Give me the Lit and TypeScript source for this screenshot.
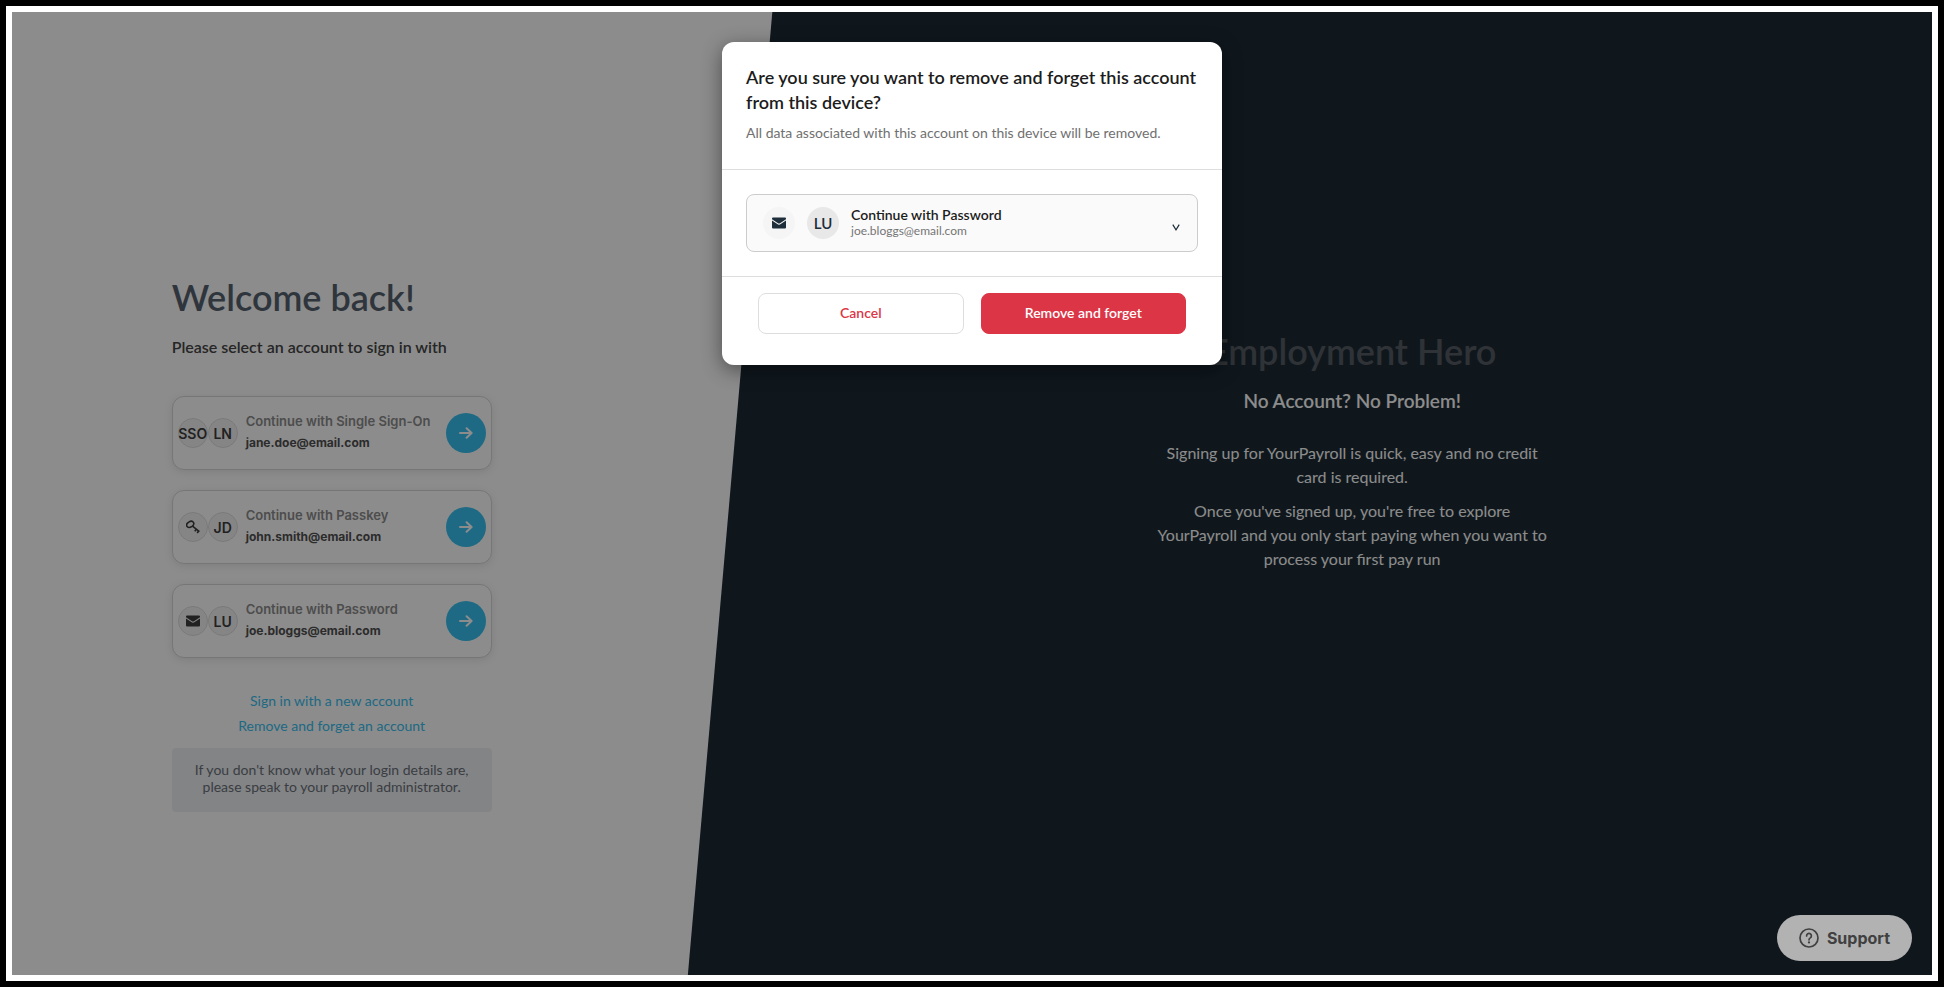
import { LitElement, html, css, svg } from "lit";
import { customElement, property, state } from "lit/decorators.js";

type Method = "sso" | "passkey" | "password";

interface Account {
  method: Method;
  label: string;
  email: string;
  initials: string;
}

const ACCOUNTS: Account[] = [
  { method: "sso", label: "Continue with Single Sign-On", email: "jane.doe@email.com", initials: "LN" },
  { method: "passkey", label: "Continue with Passkey", email: "john.smith@email.com", initials: "JD" },
  { method: "password", label: "Continue with Password", email: "joe.bloggs@email.com", initials: "LU" },
];

const envelope = html`<svg width="14" height="12" viewBox="0 0 14 12" aria-hidden="true">
  ${svg`<path fill="currentColor" d="M1 0.5h12a1 1 0 0 1 1 1v.8L8 6.2a1.8 1.8 0 0 1-2 0L0 2.3v-.8a1 1 0 0 1 1-1z"/>
  <path fill="currentColor" d="M0 3.5l5.3 3.6a3 3 0 0 0 3.4 0L14 3.5v7a1 1 0 0 1-1 1H1a1 1 0 0 1-1-1z"/>`}
</svg>`;

const key = html`<svg width="14" height="14" viewBox="0 0 14 14" aria-hidden="true">
  ${svg`<g fill="none" stroke="currentColor" stroke-width="1.6">
    <ellipse cx="4.2" cy="4.4" rx="3.8" ry="2.7" transform="rotate(-32 4.2 4.4)"/>
    <path d="M6.2 5.9l7.2 5.8M8.7 11.2l2-2.2M11.1 12.9l1.7-1.8"/>
  </g>`}
</svg>`;

const arrow = html`<svg width="14" height="12" viewBox="0 0 14 12" aria-hidden="true">
  ${svg`<path d="M1 6h11.4M7.6 1.2L12.6 6l-5 4.8" fill="none" stroke="currentColor" stroke-width="2" stroke-linecap="round" stroke-linejoin="round"/>`}
</svg>`;

const methodIcon = (m: Method) => (m === "sso" ? "SSO" : m === "passkey" ? key : envelope);

@customElement("account-card")
class AccountCard extends LitElement {
  @property({ attribute: false }) account!: Account;

  static styles = css`
    :host { display: block; }
    .card {
      box-sizing: border-box;
      display: flex;
      align-items: center;
      width: 100%;
      height: 74px;
      padding: 0 5px;
      border: 1px solid #d8d8d8;
      border-radius: 12px;
      background: #fff;
      box-shadow: 0 2px 8px rgba(0, 0, 0, 0.1);
      font-family: Inter, "Liberation Sans", sans-serif;
      text-align: left;
      cursor: pointer;
    }
    .chip {
      box-sizing: border-box;
      display: flex;
      flex: none;
      align-items: center;
      justify-content: center;
      width: 30px;
      height: 30px;
      border: 1px solid #dedede;
      border-radius: 50%;
      background: #f3f3f3;
      color: #3c3c3c;
      font-size: 14px;
      font-weight: 600;
    }
    .text { flex: 1; padding: 0 0 2px 8px; line-height: 21px; }
    .label { display: block; color: #8c8c8c; font-size: 13px; font-weight: 600; }
    .email { display: block; color: #505050; font-size: 12px; font-weight: 700; }
    .go {
      display: flex;
      flex: none;
      align-items: center;
      justify-content: center;
      width: 40px;
      height: 40px;
      border-radius: 50%;
      background: #38c0f0;
      color: #fff;
    }
  `;

  render() {
    const a = this.account;
    return html`<button class="card" type="button">
      <span class="chip">${methodIcon(a.method)}</span>
      <span class="chip">${a.initials}</span>
      <span class="text"><span class="label">${a.label}</span><span class="email">${a.email}</span></span>
      <span class="go">${arrow}</span>
    </button>`;
  }
}

@customElement("forget-dialog")
class ForgetDialog extends LitElement {
  @state() private selected = 2;

  static styles = css`
    :host { display: block; width: 500px; max-width: 100%; }
    .dialog {
      border-radius: 12px;
      background: #fff;
      color: #1c1c1c;
      box-shadow: 0 5px 20px rgba(0, 0, 0, 0.45);
    }
    .head { padding: 23px 24px 24px; border-bottom: 1px solid #dedede; }
    h2 { margin: 0 0 6px; font-size: 18px; font-weight: 600; line-height: 25px; }
    .note { margin: 0; color: #707070; font-size: 14px; line-height: 24px; }
    .body { padding: 24px; border-bottom: 1px solid #dedede; }
    .picker { display: grid; height: 58px; }
    .picker > * { grid-area: 1 / 1; }
    select {
      appearance: none;
      width: 100%;
      height: 100%;
      margin: 0;
      padding: 0 40px 18px 104px;
      border: 1px solid #ccc;
      border-radius: 8px;
      background: #fafafa;
      color: #1c1c1c;
      font: 600 14px Lato, "Liberation Sans", sans-serif;
    }
    .face {
      display: flex;
      align-items: center;
      gap: 12px;
      padding: 0 18px 0 17px;
      color: #1d2d3a;
      pointer-events: none;
    }
    .chip {
      display: flex;
      align-items: center;
      justify-content: center;
      width: 32px;
      height: 32px;
      border-radius: 50%;
      background: #f5f5f5;
      font-size: 15px;
      font-weight: 600;
    }
    .initials { background: #e8e8e8; }
    .email { flex: 1; padding-top: 16px; color: #757575; font-size: 12px; line-height: 16px; }
    .caret { padding-top: 8px; }
    .actions { display: grid; grid-template-columns: 1fr 1fr; gap: 17px; padding: 16px 36px 31px; }
    .actions button {
      box-sizing: border-box;
      height: 41px;
      padding: 0 0 2px;
      border: 1px solid #dedede;
      border-radius: 8px;
      background: #fff;
      color: #dc3545;
      font: 600 14px Lato, "Liberation Sans", sans-serif;
      cursor: pointer;
    }
    .actions .danger { border-color: #dc3545; background: #dc3545; color: #fff; }
  `;

  private pick(e: Event) {
    this.selected = (e.target as HTMLSelectElement).selectedIndex;
  }

  render() {
    const a = ACCOUNTS[this.selected];
    return html`<div class="dialog" role="dialog" aria-modal="true" aria-labelledby="title">
      <div class="head">
        <h2 id="title">Are you sure you want to remove and forget this account from this device?</h2>
        <p class="note">All data associated with this account on this device will be removed.</p>
      </div>
      <div class="body">
        <div class="picker">
          <select aria-labelledby="title" @change=${this.pick}>
            ${ACCOUNTS.map((o, i) => html`<option ?selected=${i === this.selected}>${o.label}</option>`)}
          </select>
          <div class="face">
            <span class="chip">${methodIcon(a.method)}</span>
            <span class="chip initials">${a.initials}</span>
            <span class="email">${a.email}</span>
            <svg class="caret" width="8" height="7" viewBox="0 0 8 7" aria-hidden="true">
              <path d="M0.8 0.6L4 5.8L7.2 0.6" fill="none" stroke="currentColor" stroke-width="1.2" />
            </svg>
          </div>
        </div>
      </div>
      <div class="actions">
        <button type="button">Cancel</button>
        <button type="button" class="danger">Remove and forget</button>
      </div>
    </div>`;
  }
}

@customElement("app-root")
class AppRoot extends LitElement {
  static styles = css`
    :host {
      display: block;
      box-sizing: border-box;
      min-height: 100vh;
      padding: 6px;
      background: #000;
      font-family: Lato, "Liberation Sans", sans-serif;
    }
    .frame {
      box-sizing: border-box;
      position: relative;
      display: grid;
      grid-template-columns: 39.6% 1fr;
      min-height: calc(100vh - 12px);
      border: 6px solid #fff;
      background: #1d2b35;
    }
    .slant {
      position: absolute;
      inset: 0;
      background: #fff;
      clip-path: polygon(0 0, 39.6% 0, 35.2% 100%, 0 100%);
    }
    .signin, .signup {
      position: relative;
      display: flex;
      flex-direction: column;
      justify-content: center;
    }
    .signin { padding: 100px 0 0 21%; }
    .column { width: 320px; }
    h1 { margin: 0; font-size: 36px; font-weight: 600; line-height: 44px; color: #56626d; }
    .lead { margin: 16px 0 37px; color: #454545; font-size: 16px; font-weight: 600; line-height: 24px; }
    .cards { display: grid; gap: 20px; margin: 0; padding: 0; list-style: none; }
    .links { display: flex; flex-direction: column; align-items: center; margin: 30px 0 10px; }
    .links a { color: #38c0f0; font-size: 14px; line-height: 25px; text-decoration: none; }
    .hint {
      margin: 0;
      padding: 13px 20px 17px;
      border-radius: 4px;
      background: #eff1f4;
      color: #6a7079;
      font-size: 14px;
      line-height: 17px;
      text-align: center;
    }
    .signup { align-items: center; padding-bottom: 78px; text-align: center; color: #fff; }
    .pitch { width: 392px; }
    .pitch h1 { color: #565d64; }
    h2 { margin: 14px 0 26px; font-size: 19px; font-weight: 600; line-height: 28px; }
    .pitch p { margin: 0 0 10px; font-size: 16px; line-height: 24px; }
    .backdrop {
      position: absolute;
      inset: 0;
      display: flex;
      justify-content: center;
      align-items: flex-start;
      padding-top: 30px;
      background: rgba(0, 0, 0, 0.45);
    }
    .support {
      position: absolute;
      right: 20px;
      bottom: 14px;
      display: flex;
      align-items: center;
      gap: 8px;
      height: 46px;
      padding: 0 22px;
      border: 0;
      border-radius: 23px;
      background: #b2b2b2;
      color: #404040;
      font: 700 16px Inter, "Liberation Sans", sans-serif;
      cursor: pointer;
    }
  `;

  render() {
    return html`<div class="frame">
      <div class="slant"></div>
      <section class="signin">
        <div class="column">
          <h1>Welcome back!</h1>
          <p class="lead">Please select an account to sign in with</p>
          <ul class="cards">
            ${ACCOUNTS.map((a) => html`<li><account-card .account=${a}></account-card></li>`)}
          </ul>
          <nav class="links">
            <a href="#new">Sign in with a new account</a>
            <a href="#forget">Remove and forget an account</a>
          </nav>
          <p class="hint">If you don't know what your login details are, please speak to your payroll administrator.</p>
        </div>
      </section>
      <section class="signup">
        <div class="pitch">
          <h1>Employment Hero</h1>
          <h2>No Account? No Problem!</h2>
          <p>Signing up for YourPayroll is quick, easy and no credit card is required.</p>
          <p>Once you've signed up, you're free to explore YourPayroll and you only start paying when you want to process your first pay run</p>
        </div>
      </section>
      <div class="backdrop"><forget-dialog></forget-dialog></div>
      <button class="support" type="button">
        <svg width="20" height="20" viewBox="0 0 20 20" fill="none" stroke="currentColor" aria-hidden="true">
          <circle cx="10" cy="10" r="9" stroke-width="1.7" />
          <path d="M7.6 7.9a2.4 2.4 0 1 1 3.7 2c-.9.6-1.3 1-1.3 1.9" stroke-width="1.7" stroke-linecap="round" />
          <circle cx="10" cy="14.4" r="1.1" fill="currentColor" stroke="none" />
        </svg>
        Support
      </button>
    </div>`;
  }
}
